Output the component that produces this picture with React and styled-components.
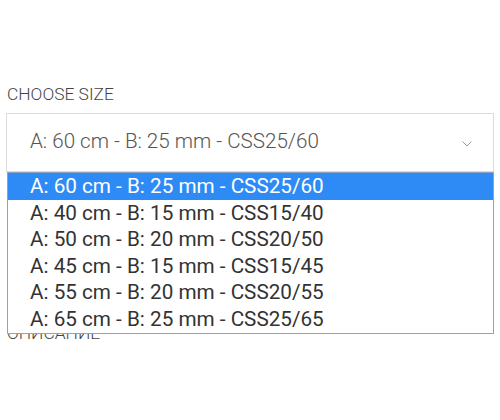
import React, { useState } from 'react';
import styled, { createGlobalStyle } from 'styled-components';

const GlobalStyle = createGlobalStyle`
    html, body {
        margin: 0;
        padding: 0;
        background: #fff;
        font-family: Roboto, "Liberation Sans", Arial, sans-serif;
    }
`;

const sizes = [
    'A: 60 cm - B: 25 mm - CSS25/60',
    'A: 40 cm - B: 15 mm - CSS15/40',
    'A: 50 cm - B: 20 mm - CSS20/50',
    'A: 45 cm - B: 15 mm - CSS15/45',
    'A: 55 cm - B: 20 mm - CSS20/55',
    'A: 65 cm - B: 25 mm - CSS25/65',
];

const App = () => {
    const [selected, setSelected] = useState(0);

    return (
        <Page>
            <GlobalStyle />
            <Label>CHOOSE SIZE</Label>
            <SelectWrap>
                <SelectBox>
                    <span>{sizes[selected]}</span>
                    <svg width="10" height="6" viewBox="0 0 10 6" className="chevron">
                        <polyline points="0.5,0.5 5,5 9.5,0.5" fill="none" stroke="#9a9a9a" strokeWidth="1" />
                    </svg>
                </SelectBox>
                <OptionList>
                    {sizes.map((s, i) => (
                        <Option key={s} $active={i === selected} onClick={() => setSelected(i)}>
                            {s}
                        </Option>
                    ))}
                </OptionList>
            </SelectWrap>
            {/* next field's label, covered by the open list */}
            <Label $spaced>ОПИСАНИЕ</Label>
        </Page>
    );
};

const Page = styled.div`
    padding: 84px 6px 0 6px;
`;

const Label = styled.div`
    font-size: 17.4px;
    line-height: 20px;
    font-weight: 300;
    color: #444;
    margin-top: ${(p) => (p.$spaced ? '151px' : '0')};
    margin-bottom: 9px;
    padding-left: 1px;
`;

const SelectWrap = styled.div`
    position: relative;
`;

const SelectBox = styled.div`
    box-sizing: border-box;
    height: 59px;
    border: 1px solid #dcdcdc;
    display: flex;
    align-items: center;
    justify-content: space-between;
    padding: 0 21px 4px 23px;
    font-size: 20.6px;
    font-weight: 300;
    color: #555;

    .chevron {
        margin-top: 6px;
    }
`;

const OptionList = styled.ul`
    position: absolute;
    top: 100%;
    left: 1px;
    right: 0;
    margin: 0;
    padding: 0;
    list-style: none;
    background: #fff;
    border: 1px solid #8ea3c4;
    z-index: 2;
`;

const Option = styled.li`
    height: 26.6px;
    line-height: 26.6px;
    padding-left: 22px;
    font-size: 20.7px;
    font-weight: 400;
    color: ${(p) => (p.$active ? '#fff' : '#333')};
    background: ${(p) => (p.$active ? '#2e8bf5' : '#fff')};
    cursor: default;
`;

export default App;
